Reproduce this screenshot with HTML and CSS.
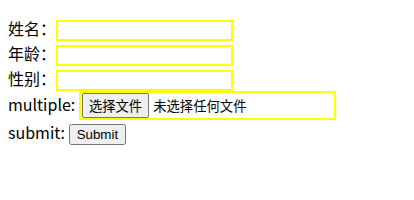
FILE: index.html
```html
<!DOCTYPE html>
<html lang="zh-CN">
<head>
    <meta charset="UTF-8">
    <meta name="viewport" content="width=device-width, initial-scale=1.0">
    <title>表单</title>
    <link rel="stylesheet" href="styles.css">
</head>
<body>
    <form class="form">
        <label>姓名：</label><input class="field" type="text" name="name"><br>
        <label>年龄：</label><input class="field" type="text" name="age"><br>
        <label>性别：</label><input class="field" type="text" name="sex"><br>
        <label>multiple:</label>
        <label class="file-field">
            <input class="file-input" type="file" name="files" multiple>
            <span class="file-btn">选择文件</span><span class="file-name">未选择任何文件</span>
        </label><br>
        <label>submit:</label> <input class="submit" type="submit" value="Submit">
    </form>
</body>
</html>
```

FILE: styles.css
```css
body {
    margin: 8px;
    font-family: "Noto Sans CJK SC", sans-serif;
    font-size: 16px;
}

.form {
    margin-top: 8px;
}

.field {
    box-sizing: border-box;
    width: 177px;
    border: 2px solid yellow;
}

.file-field {
    display: inline-block;
    box-sizing: border-box;
    width: 257px;
    padding: 0 1px;
    border: 2px solid yellow;
    font-size: 13.33px;
    line-height: 25px;
}

.file-input {
    display: none;
}

.file-btn {
    display: inline-block;
    padding: 0 6px;
    margin-right: 4px;
    border: 1px solid #767676;
    border-radius: 2px;
    background-color: #efefef;
    color: #000;
    line-height: 23px;
}

.submit {
    font-family: "Liberation Sans", Arial, sans-serif;
}
```
